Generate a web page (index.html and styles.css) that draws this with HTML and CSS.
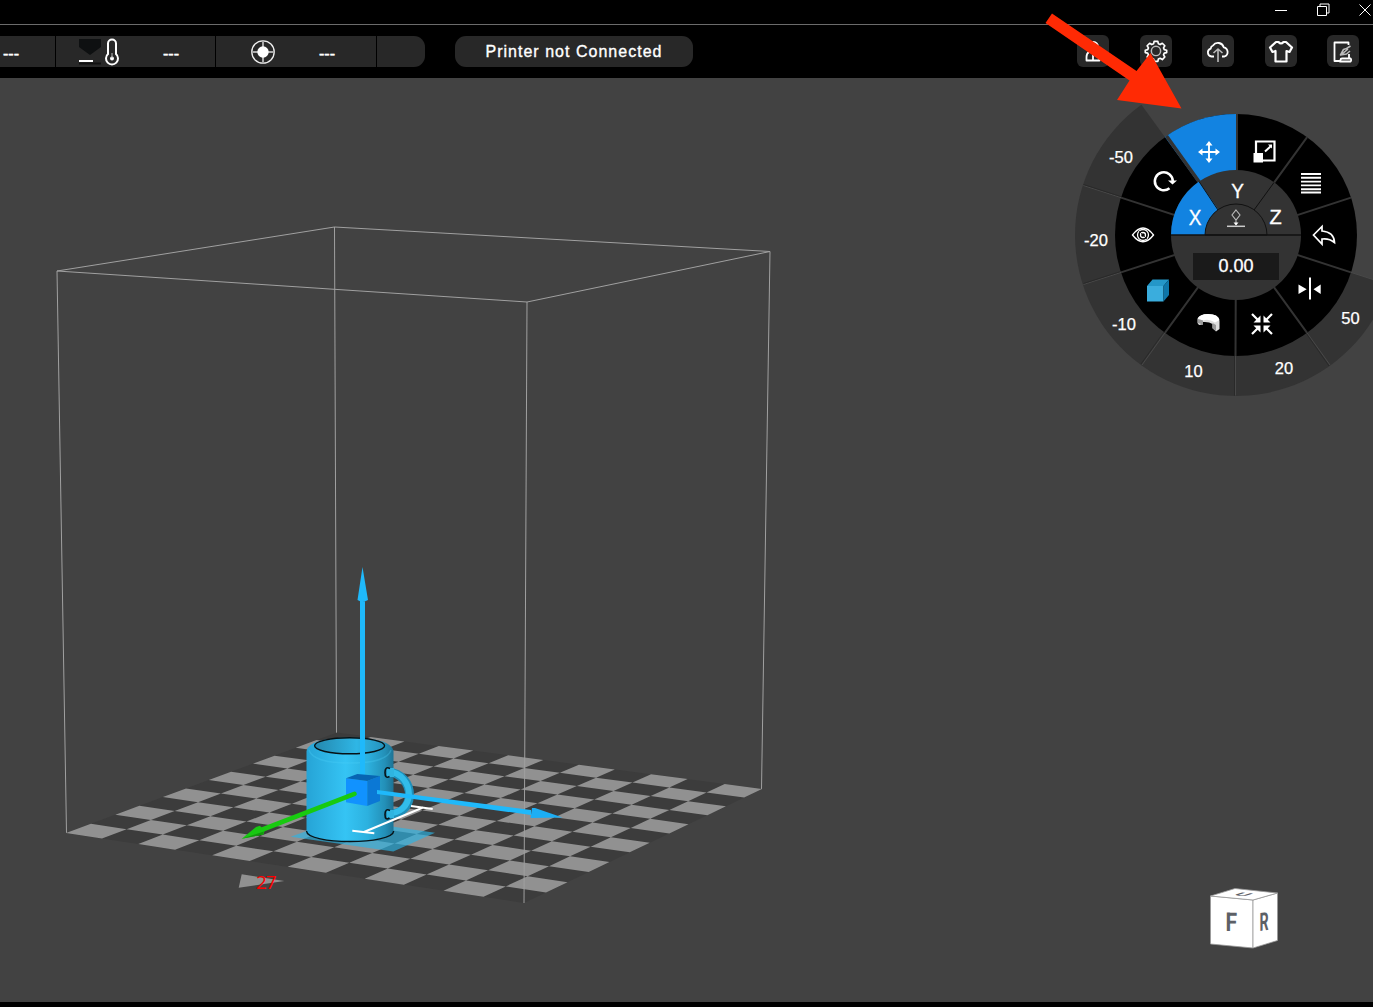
FILE: index.html
```html
<!DOCTYPE html>
<html lang="en">
<head>
<meta charset="utf-8">
<title>Printer Studio</title>
<link rel="stylesheet" href="styles.css">
</head>
<body>
<div class="app">
  <header class="titlebar">
    <svg class="win" viewBox="0 0 14 16"><path d="M1 9.500h12"/></svg>
    <svg class="win" viewBox="0 0 14 16"><path d="M1.500 5.500h9v9h-9zM4 5v-2h9v9h-2.500"/></svg>
    <svg class="win" viewBox="0 0 14 16"><path d="M1.500 3.500l11 11M12.500 3.500l-11 11"/></svg>
  </header>
  <div class="toolbar">
    <div class="status">
      <div class="cell cell-first"><span>---</span></div>
      <div class="cell cell-bed">
        <svg width="42" height="28" viewBox="78 38 42 28">
          <path d="M79 39h22v8l-11 8-11-8z" fill="#0e1011"/><path d="M79 62.500h22v2H79z" fill="#111"/><path d="M79 60h14v2H79z" fill="#fff"/>
          <path d="M108 54v-10.500a4 4 0 0 1 8 0V54a6 6 0 1 1-8 0z" fill="none" stroke="#fff" stroke-width="2"/>
          <circle cx="112" cy="58.500" r="2" fill="#fff"/><path d="M112 53v5" stroke="#bbb"/>
        </svg>
        <span>---</span>
      </div>
      <div class="cell cell-fan">
        <svg width="26" height="26" viewBox="-13 -13 26 26"><circle r="11.200" fill="none" stroke="#eee" stroke-width="1.300"/><path d="M0-11v22M-11 0h22" stroke="#aaa" stroke-width="2"/><circle r="5.700" fill="#fff"/></svg>
        <span>---</span>
      </div>
      <div class="cell cell-end"></div>
    </div>
    <div class="connection">Printer not Connected</div>
    <nav class="actions">
      <button><svg viewBox="0 0 32 32"><path d="M12 15.500v-4a4.500 4.500 0 0 1 9 0v4M12 17q-2.500 1.500-2.500 5v3.500h13V22q0-3.500-2.500-5zM16 20v5"/></svg></button>
      <button><svg viewBox="0 0 32 32"><g transform="translate(1.100 1.100) scale(.93)"><path d="M14 6.500h4l.6 2.600 1.900.8 2.300-1.400 2.700 2.700-1.400 2.300.8 1.900 2.600.6v2.500l-2.600.6-.8 1.900 1.400 2.300-2.700 2.700-2.300-1.400-1.900.8-.6 2.600h-4l-.6-2.600-1.900-.8-2.300 1.400-2.700-2.700 1.400-2.300-.8-1.900-2.600-.6V16l2.600-.6.8-1.900-1.400-2.300 2.700-2.700 2.300 1.400 1.900-.8z" transform="translate(0 -.8)"/><circle class="dim" cx="16" cy="16" r="5"/></g></svg></button>
      <button><svg viewBox="0 0 32 32"><path d="M12 21.500H9.500a4 4 0 0 1-.8-7.800 3.500 3.500 0 0 1 2.300-3.200 6 6 0 0 1 10.700 1.800 4.800 4.800 0 0 1 .8 9.200H20"/><path class="dim" d="M16 27V14.500M11.500 18l4.500-4 4.500 4"/></svg></button>
      <button><svg viewBox="0 0 32 32"><path d="M11 7l-6 5.500 2.500 4.500 3-1v10.500h11V16l3 1 2.500-4.500L21 7h-2.500q-2.500 3-5 0z" stroke-width="2.200"/></svg></button>
      <button><svg viewBox="0 0 32 32"><path d="M21.500 10V7.500h-14V26h5M13 26.500h10.500a2 2 0 0 0 0-3H15q-1.500 0-1.500 1.500t-1.500 1.500M22 23v-4"/><path class="dim" d="M23.500 11l-4 2.500-3 1-3 5.500 6-1 3.500-3M14 20l7-6"/></svg></button>
    </nav>
  </div>
  <main class="viewport">
    <svg class="scene" viewBox="0 78 1373 924">
      <defs>
        <linearGradient id="mugBody"><stop offset="0" stop-color="#26a4d6"/><stop offset=".45" stop-color="#35c4f4"/><stop offset=".7" stop-color="#2cb1df"/><stop offset=".9" stop-color="#2390b8"/><stop offset="1" stop-color="#1d7395"/></linearGradient>
        <linearGradient id="mugInner"><stop offset="0" stop-color="#2488ae"/><stop offset=".6" stop-color="#2fb6e5"/><stop offset="1" stop-color="#2592bd"/></linearGradient>
      </defs>
      <g class="volume">
        <path d="M57 271L334.500 227L770 251.500L527 302zM57 271L66.500 833M334.500 227L336.500 733M770 251.500L761.500 789"/>
      </g>
      <polygon points="66,833 524,903 762,789 337,732.500" fill="#3c3c3c"/>
      <path id="checker" fill="#919191"/>
      <path class="front-edge" d="M527 302L524 903"/>
      <path d="M290.700 836.700L393.300 851.500L435 832.700L340 819z" fill="#2bb5e6" opacity=".65"/>
      <path d="M388 772C402 773 409.500 784 409.500 795C409 808 399 815 388 814" fill="none" stroke="#1f8fb9" stroke-width="9"/>
      <path d="M388 771.500C402 772.500 409 784 409 795C408 807 399 813.500 388 813.500" fill="none" stroke="#32bce9" stroke-width="6"/>
      <path d="M306.500 751Q309 738 349.700 737.500Q391 738 393.500 751V832C393 845 307 845 306.500 832z" fill="url(#mugBody)"/>
      <path d="M309 750Q313 763 350 763T391 750" fill="none" stroke="#4bd0f7" stroke-width="1.500" opacity=".3"/>
      <ellipse cx="349.600" cy="745.800" rx="35" ry="8" fill="url(#mugInner)" stroke="#071216" stroke-width="1.400"/>
      <path d="M306.500 831C307 845 393 845 393.700 831" fill="none" stroke="#071216" stroke-width="1.400"/>
      <path d="M387 768h7v9h-7zM387 810h7v8h-7z" fill="#2fb4e0"/>
      <path d="M390 768.500Q385 766 385 772.500T389.500 776.500M390 810.500Q385 808 385 814.500T389.500 818" fill="none" stroke="#071216" stroke-width="1.600"/>
      <path d="M364 832L423 807.500M352.300 830.700L374.300 833.300M411 806L432.700 809" stroke="#fff" stroke-width="2"/>
      <path d="M360 599h5V778h-5zM362.500 567L368 600Q362.500 603 357.500 600z" fill="#1fb9fb"/>
      <path d="M346 778.300L367.300 781V806L346 802.300z" fill="#1192ff"/>
      <path d="M367.300 781L380 776V801L367.300 806z" fill="#0b78d5"/>
      <path d="M346 778.300L357.300 774L380 776L367.300 781z" fill="#0765b3"/>
      <path d="M377 790L531 810V815L377 794z" fill="#1fb9fb"/><path d="M530.500 818L532 808H535L562.500 817.400z" fill="#1caef4"/>
      <path d="M354.500 793.800L260 830.500" stroke="#18ca10" stroke-width="4.600" stroke-linecap="round"/>
      <path d="M241.700 838.700L256 827L260 825.700L264.500 831L263.500 834.500z" fill="#18c812"/><path d="M241.700 838.700L264 831.500L263 834.500z" fill="#13970e"/>
      <path d="M241.700 874.300L238.700 887.700L284.300 881z" fill="#919191"/>
      <text x="256" y="889" class="measure">27</text>
      <g class="cube">
        <path d="M1210.500 896L1253 900V948L1210.500 944z"/><path d="M1253 900L1277.500 893V940.500L1253 948z"/><path d="M1210.500 896L1235 888.500L1277.500 893L1253 900z"/>
        <text transform="matrix(.92 .02 0 1.130 1225.500 931)" class="face">F</text>
        <text transform="matrix(.62 -.08 0 1.100 1259.500 931)" class="face">R</text>
        <text transform="matrix(.88 .08 -.52 .160 1232.500 895)" class="face">U</text>
      </g>
    </svg>
    <svg class="dial" viewBox="1070 95 303 305">
      <g transform="translate(1236 235)">
        <path d="M0 0L-94.600-130.300A161 161 0 1 0 153.100 49.800z" fill="#333"/>
        <circle r="121"/>
        <path d="M0 0L-71.100-97.900A121 121 0 0 1 0-121z" fill="#1283e1"/>
        <g stroke="#333" stroke-width="2"><path d="M1 0V-121M0 0L71.100-97.900M0 0L115-37.400M0 0L115 37.400M0 0L71.100 97.900M0 0L-.5 121M0 0L-71.100 97.900M0 0L-115 37.400M0 0L-115-37.400"/><path d="M1 0L-69.500-99" stroke-width="3.500"/></g>
        <path d="M71.100 97.900L94 130M-.5 121V160.500M-71.100 97.900L-94 130M-115 37.400L-152.500 49.500M-115-37.400L-152.500-49.500M115 37.400L152.500 49.500" stroke="#484848"/>
        <path d="M70.500 98.900L93 131M-1.500 121V160.500M-72.100 96.900L-95 129M-115 36.400L-152.500 48.500M-115-38.400L-152.500-50.500" stroke="#292929"/>
        <circle r="65" fill="#333"/>
        <path d="M0 0H-65A65 65 0 0 1-37-53.500z" fill="#1283e1"/>
        <path d="M-18-25L-37-53.500M18-25L38-52.500" stroke="#111"/>
        <path d="M-31 0a31 31 0 0 1 62 0z" fill="#333" stroke="#111"/>
        <path d="M-65 0H65" stroke="#111" stroke-width="1.300"/>
        <path d="M-43 18H43V45H-43z" fill="#1a1a1a"/>
      </g>
      <g class="labels">
        <text x="1121" y="163">-50</text><text x="1096" y="246">-20</text><text x="1124" y="330">-10</text><text x="1193.500" y="377">10</text><text x="1284" y="374">20</text><text x="1350.500" y="324">50</text>
      </g>
      <g class="axes"><text transform="translate(1195 224.500) scale(.95 1.080)">X</text><text transform="translate(1237.500 197.500) scale(.95 1.030)">Y</text><text transform="translate(1275.500 224) scale(1 1.030)">Z</text></g>
      <text class="amount" x="1236" y="272">0.00</text>
      <g class="icon">
        <path d="M1200 152h18M1209 143v18" stroke-width="1.900"/><path class="solid" d="M1198 152l4.500-3.500v7zM1220 152l-4.500-3.500v7zM1209 141l-3.500 4.500h7zM1209 163l-3.500-4.500h7z"/>
        <path d="M1256 153v-11.500h18.500V160.500H1262" stroke-width="2.200"/><path class="solid" d="M1253.500 153h9.500v9.500h-9.500z"/><path d="M1265 151.500l6-5.500" stroke-width="2"/><path class="solid" d="M1268 144.500h4v4z"/>
        <path d="M1301 174h20M1301 177.800h20M1301 181.600h20M1301 185.400h20M1301 189.200h20M1301 192.500h20" stroke-width="1.900"/>
        <path d="M1313.500 235L1322 226.500V231Q1334 232 1334.500 242.500Q1329 238 1322 239V244z" stroke-width="1.700"/>
        <path d="M1310 277.500v22" stroke-width="2"/><path class="solid" d="M1298.500 284.500v9.500l8.200-4.700zM1320.700 284.500v9.500l-7.200-4.700z"/>
        <path d="M1252 314l6 6M1272 314l-6 6M1252 334l6-6M1272 334l-6-6" stroke-width="2.200"/><path class="solid" d="M1260.500 315.500v7h-7zM1263.500 315.500v7h7zM1260.500 332.500v-7h-7zM1263.500 332.500v-7h7z"/>
        <path d="M1169.500 188.300a9 9 0 1 1 3.300-7" stroke-width="2.500"/><path class="solid" d="M1168 180.500h9l-4.500 4z"/>
        <path d="M1132.500 235q10.500-14 21 0q-10.500 13.500-21 0z" stroke-width="1.300"/><circle cx="1143" cy="235" r="5.500" stroke-width="1.300"/><circle cx="1143" cy="235" r="2.500" stroke-width="1.300"/><path d="M1139 231l8 8" stroke="#111" stroke-width=".8"/>
        <path d="M1236 210l4 5-4 5-4-5zM1236 220v5" stroke="#bbb" stroke-width="1.100"/><path d="M1227 226.300h18" stroke="#ccc" stroke-width="1.500"/><path class="solid" d="M1233.500 222.500h5l-2.500 3z"/>
      </g>
      <path d="M1147 286h16.500v15.500H1147z" fill="#3aaddd"/><path d="M1147 286l5.500-6.500H1169l-5.500 6.500z" fill="#2497c8"/><path d="M1163.500 286l5.500-6.500v15.500l-5.500 6.500z" fill="#0e76a8"/>
      <path d="M1197.500 319Q1200 314 1208 314Q1219 314 1219.500 321V329L1216 331.500L1212.500 328V324Q1209 321.500 1203 322V324.500L1199 325L1197.500 323z" fill="#ddd"/><path d="M1197.500 318.500Q1200 314 1208 314Q1218 314 1219.500 320L1215 322.500Q1209 318.500 1203 320.500z" fill="#fff"/><path d="M1198 319l5 1.500v4l-5-1.500zM1212.500 323l3.500 2v6l-3.500-2.500z" fill="#999"/>
    </svg>
  </main>
  <footer class="baseline"></footer>
  <svg class="pointer" viewBox="1040 10 150 105"><path d="M1052 13.500L1136.500 71L1150.500 53L1181.500 108.500L1117 100L1129.500 80.500L1045.500 23z" fill="#ff2a04"/></svg>
</div>
<script src="floor.js"></script>
</body>
</html>
```
FILE: styles.css
```css
* { box-sizing: border-box; }
body { margin: 0; background: #000; font-family: "Liberation Sans", Arial, sans-serif; color: #fff; overflow: hidden; }
.app { position: relative; width: 1373px; height: 1007px; display: flex; flex-direction: column; overflow: hidden; }
.titlebar { height: 25px; flex: none; display: flex; justify-content: flex-end; gap: 28px; padding: 1px 1px 0 0; border-bottom: 1px solid #6b6b6b; background: #000; }
.win { width: 14px; height: 16px; flex: none; fill: none; stroke: #fff; stroke-width: 1; overflow: visible; }
.toolbar { height: 53px; flex: none; display: flex; align-items: flex-start; background: #000; padding-top: 10px; }
.status { display: flex; width: 425px; height: 32px; padding-top: 1px; }
.cell { height: 31px; background: #282828; display: flex; align-items: center; border-right: 1px solid #000; font-size: 16px; }
.cell span { line-height: 31px; padding-top: 3px; -webkit-text-stroke: .5px #fff; }
.cell-first { width: 56px; padding-left: 3px; }
.cell-bed { width: 160px; padding-left: 22px; gap: 43px; }
.cell-fan { width: 161px; padding-left: 34px; gap: 43px; }
.cell-end { width: 48px; border-right: 0; border-radius: 0 11px 11px 0; }
.connection { width: 238px; height: 31px; margin: 1px 384px 0 30px; border-radius: 11px; background: #282828; text-align: center; font-size: 16px; line-height: 31px; letter-spacing: 1.020px; white-space: nowrap; -webkit-text-stroke: .35px #fff; }
.actions { display: flex; gap: 30.500px; }
.actions button { width: 32px; height: 32px; padding: 0; border: 0; border-radius: 6px; background: #282828; }
.actions svg { display: block; width: 32px; height: 32px; fill: none; stroke: #fff; stroke-width: 1.800; stroke-linejoin: round; }
.actions .dim { stroke: #bbb; stroke-width: 1.600; }
.viewport { position: relative; height: 924px; flex: none; background: #424242; }
.scene { display: block; width: 1373px; height: 924px; }
.volume path, .front-edge { fill: none; stroke: #a0a0a0; stroke-width: 1; }
.measure { font: 19px "Open Sans", "Noto Sans", sans-serif; fill: #f00; letter-spacing: -1px; }
.cube path { fill: #fff; stroke: #999; stroke-width: .8; }
.face { font-size: 23px; font-weight: bold; fill: #5c6066; font-family: Roboto, sans-serif; }
.dial { position: absolute; left: 1070px; top: 17px; width: 303px; height: 305px; }
.labels { font-size: 16.500px; fill: #fff; text-anchor: middle; stroke: #fff; stroke-width: .25px; }
.axes { font-size: 20px; fill: #fff; text-anchor: middle; stroke: #fff; stroke-width: .3px; }
.amount { font-size: 18px; fill: #fff; text-anchor: middle; stroke: #fff; stroke-width: .3px; }
.icon { fill: none; stroke: #fff; stroke-width: 2.200; }
.icon .solid { fill: #fff; stroke: none; }
.baseline { height: 5px; background: #000; }
.pointer { position: absolute; left: 1040px; top: 10px; width: 150px; height: 105px; }
```
FILE: floor.js
```js
// Perspective checkerboard for the 12 x 12 print bed.
const left = [66, 833], front = [524, 903], right = [762, 789], back = [337, 732.5];
const sx = left[0] - front[0] + right[0] - back[0];
const sy = left[1] - front[1] + right[1] - back[1];
const ax = front[0] - right[0], ay = front[1] - right[1];
const bx = back[0] - right[0], by = back[1] - right[1];
const det = ax * by - bx * ay;
const g = (sx * by - bx * sy) / det;
const h = (ax * sy - sx * ay) / det;
function project(u, v) {
  const w = g * u + h * v + 1;
  return [0, 1].map(k =>
    ((front[k] - left[k] + g * front[k]) * u + (back[k] - left[k] + h * back[k]) * v + left[k]) / w
  ).map(n => n.toFixed(2)).join(",");
}
let d = "";
const n = 12;
for (let i = 0; i < n; i++) {
  for (let j = i % 2; j < n; j += 2) {
    d += "M" + [[i, j], [i + 1, j], [i + 1, j + 1], [i, j + 1]].map(p => project(p[0] / n, p[1] / n)).join("L") + "Z";
  }
}
document.getElementById("checker").setAttribute("d", d);
```
